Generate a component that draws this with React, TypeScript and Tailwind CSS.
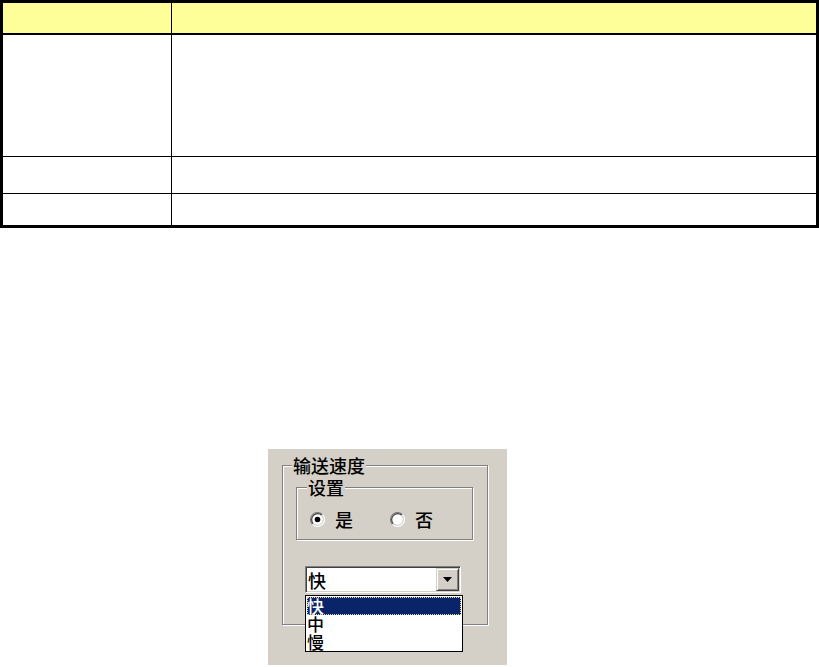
import React from 'react';

const cjk = { fontFamily: '"Noto Sans CJK SC", "Noto Sans", sans-serif' };

const rows = [
    { h: 'h-[122px]', line: true },
    { h: 'h-[37px]', line: true },
    { h: 'h-[31px]', line: false },
];

const Radio = ({ checked }: { checked?: boolean }) => (
    <svg width="15" height="15" viewBox="0 0 15 15" className="shrink-0">
        <circle cx="7.5" cy="7.5" r="7" fill="#fff" />
        {/* outer ring: dark top-left, light bottom-right */}
        <path d="M12.45 2.55 A7 7 0 0 0 2.55 12.45" fill="none" stroke="#808080" strokeWidth="1.2" />
        <path d="M2.55 12.45 A7 7 0 0 0 12.45 2.55" fill="none" stroke="#ffffff" strokeWidth="1.2" />
        <path d="M11.74 3.26 A6 6 0 0 0 3.26 11.74" fill="none" stroke="#404040" strokeWidth="1.2" />
        <path d="M3.26 11.74 A6 6 0 0 0 11.74 3.26" fill="none" stroke="#d4d0c8" strokeWidth="1.2" />
        {checked && <circle cx="7.5" cy="7.5" r="2.8" fill="#000" />}
    </svg>
);

export default function App() {
    return (
        <div className="w-[819px] h-[667px] bg-white overflow-hidden" style={cjk}>
            {/* table */}
            <div className="w-[819px] border-[3px] border-black">
                <div className="flex h-[32px] bg-[#ffff99] border-b-2 border-black">
                    <div className="w-[169px] border-r border-black"></div>
                    <div className="flex-1"></div>
                </div>
                {rows.map((r, i) => (
                    <div key={i} className={`flex ${r.h} ${r.line ? 'border-b border-black' : ''}`}>
                        <div className="w-[169px] border-r border-black"></div>
                        <div className="flex-1"></div>
                    </div>
                ))}
            </div>

            {/* dialog fragment */}
            <div className="ml-[268px] mt-[221px] w-[239px] h-[216px] bg-[#d4d0c8] pt-[16px] pl-[14px] text-black font-medium">
                <div className="relative w-[206px] h-[160px] border border-[#808080] shadow-[1px_1px_0_#fff,inset_1px_1px_0_#fff]">
                    <span className="absolute left-[9px] top-[-1px] -translate-y-1/2 bg-[#d4d0c8] px-px text-[18px] leading-[17px]">输送速度</span>

                    <div className="relative ml-[13px] mt-[21px] w-[177px] h-[53px] border border-[#808080] shadow-[1px_1px_0_#fff,inset_1px_1px_0_#fff]">
                        <span className="absolute left-[10px] top-[-1px] -translate-y-1/2 bg-[#d4d0c8] px-px text-[18px] leading-[17px]">设置</span>
                        <div className="flex items-center pl-[13px] pt-[22px] text-[18px] leading-[18px]">
                            <Radio checked />
                            <span className="ml-[10px]">是</span>
                            <span className="ml-[37px] flex items-center">
                                <Radio />
                                <span className="ml-[10px]">否</span>
                            </span>
                        </div>
                    </div>

                    {/* combo box */}
                    <div className="ml-[22px] mt-[26px] w-[156px] h-[27px] flex items-center bg-white border border-t-[#808080] border-l-[#808080] border-b-white border-r-white shadow-[inset_1px_1px_0_#404040,inset_-1px_-1px_0_#d4d0c8] p-[1px]">
                        <span className="flex-1 pl-[1px] text-[18px] leading-[18px]">快</span>
                        <div className="w-[23px] h-[23px] flex items-center justify-center bg-[#d4d0c8] border border-t-[#d4d0c8] border-l-[#d4d0c8] border-b-[#404040] border-r-[#404040] shadow-[inset_1px_1px_0_#fff,inset_-1px_-1px_0_#808080]">
                            <svg width="9" height="5" viewBox="0 0 9 5">
                                <path d="M0 0 H9 L4.5 5 Z" fill="#000" />
                            </svg>
                        </div>
                    </div>

                    {/* open drop-down list */}
                    <div className="absolute left-[22px] top-[129px] w-[158px] h-[57px] bg-white border border-black p-px text-[17px] leading-[18px]">
                        <div className="h-[18px] bg-[#0a246a] text-white outline outline-1 outline-dotted outline-[#e8d890] -outline-offset-1">快</div>
                        <div className="h-[18px]">中</div>
                        <div className="h-[18px]">慢</div>
                    </div>
                </div>
            </div>
        </div>
    );
}
